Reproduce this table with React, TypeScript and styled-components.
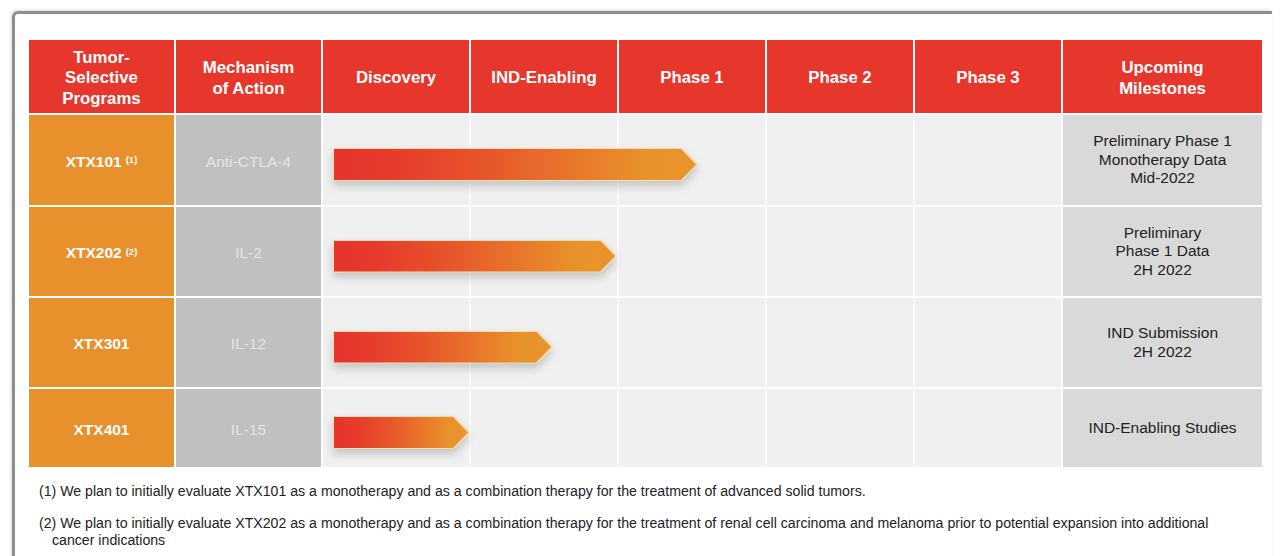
import styled, { createGlobalStyle } from 'styled-components';

const GlobalStyle = createGlobalStyle`
    html, body {
        margin: 0;
        background: #ffffff;
        font-family: "Liberation Sans", Arial, sans-serif;
    }
`;

type Program = {
    name: string;
    note?: string;
    mechanism: string;
    progress: number;
    milestone: string[];
};

const phases = ['Discovery', 'IND-Enabling', 'Phase 1', 'Phase 2', 'Phase 3'];

const programs: Program[] = [
    { name: 'XTX101', note: '(1)', mechanism: 'Anti-CTLA-4', progress: 365, milestone: ['Preliminary Phase 1', 'Monotherapy Data', 'Mid-2022'] },
    { name: 'XTX202', note: '(2)', mechanism: 'IL-2', progress: 284, milestone: ['Preliminary', 'Phase 1 Data', '2H 2022'] },
    { name: 'XTX301', mechanism: 'IL-12', progress: 220, milestone: ['IND Submission', '2H 2022'] },
    { name: 'XTX401', mechanism: 'IL-15', progress: 137, milestone: ['IND-Enabling Studies'] },
];

const App = () => {
    return (
        <>
            <GlobalStyle />
            <Slide>
                <Pipeline>
                    <HeadCell>Tumor-<br />Selective<br />Programs</HeadCell>
                    <HeadCell>Mechanism<br />of Action</HeadCell>
                    {phases.map(p => <HeadCell key={p}>{p}</HeadCell>)}
                    <HeadCell>Upcoming<br />Milestones</HeadCell>

                    {programs.map(row => (
                        <Row key={row.name}>
                            <ProgramCell>
                                {row.name}
                                {row.note && <Note>{row.note}</Note>}
                            </ProgramCell>
                            <MechanismCell>{row.mechanism}</MechanismCell>
                            <Track>
                                <ArrowShadow>
                                    <ArrowEdge style={{ width: row.progress }}>
                                        <ArrowFill />
                                    </ArrowEdge>
                                </ArrowShadow>
                            </Track>
                            <MilestoneCell>
                                {row.milestone.map(line => <span key={line}>{line}</span>)}
                            </MilestoneCell>
                        </Row>
                    ))}
                </Pipeline>

                <Footnotes>
                    <Footnote>(1) We plan to initially evaluate XTX101 as a monotherapy and as a combination therapy for the treatment of advanced solid tumors.</Footnote>
                    <Footnote>(2) We plan to initially evaluate XTX202 as a monotherapy and as a combination therapy for the treatment of renal cell carcinoma and melanoma prior to potential expansion into additional cancer indications</Footnote>
                </Footnotes>
            </Slide>
        </>
    );
};

export default App;

// styled-components

const Slide = styled.div`
    margin: 11px 8px 0 12px;
    height: 560px;
    padding: 26px 0 0 14px;
    border-top: 3px solid #8e8e8e;
    border-left: 3px solid #8e8e8e;
    border-top-left-radius: 6px;
    box-shadow: -1px -1px 3px rgba(0, 0, 0, 0.15);
    box-sizing: border-box;
`;

const Pipeline = styled.div`
    display: grid;
    width: 1233px;
    grid-template-columns: 145px 145px repeat(5, 146px) 199px;
    grid-template-rows: 73px 90px 89px 89px 78px;
    gap: 2px;
`;

const HeadCell = styled.div`
    display: flex;
    align-items: center;
    justify-content: center;
    text-align: center;
    padding-top: 4px;
    background: #e7372c;
    color: #ffffff;
    font-size: 16.8px;
    font-weight: bold;
    line-height: 20.5px;
`;

const Row = styled.div`
    display: contents;
`;

const BodyCell = styled.div`
    display: flex;
    align-items: center;
    justify-content: center;
    text-align: center;
    font-size: 15.5px;
`;

const ProgramCell = styled(BodyCell)`
    background: #e8912c;
    color: #ffffff;
    font-weight: bold;
    padding-top: 3px;
`;

const Note = styled.sup`
    font-size: 9.5px;
    margin-left: 4px;
    position: relative;
    top: -2px;
`;

const MechanismCell = styled(BodyCell)`
    background: #c1c0c0;
    color: #e4e4e4;
    padding-top: 3px;
`;

const Track = styled.div`
    grid-column: span 5;
    display: flex;
    align-items: center;
    padding: 9px 0 0 10px;
    background-color: #f0f0f0;
    background-image: repeating-linear-gradient(
        to right,
        transparent 0 146px,
        #f9f9f9 146px 148px
    );
`;

const ArrowShadow = styled.div`
    filter: drop-shadow(0 5px 4px rgba(0, 0, 0, 0.18));
`;

const ArrowEdge = styled.div`
    height: 33px;
    padding: 1px 2px 1px 1px;
    box-sizing: border-box;
    background: #f6dcb2;
    clip-path: polygon(0 0, calc(100% - 16px) 0, 100% 50%, calc(100% - 16px) 100%, 0 100%);
`;

const ArrowFill = styled.div`
    height: 100%;
    background: linear-gradient(
        to right,
        #e6352c 0%,
        #e7392c 14%,
        #e7562b 42%,
        #e8792a 68%,
        #e8922b 86%,
        #e8942b 100%
    );
    clip-path: polygon(0 0, calc(100% - 15px) 0, 100% 50%, calc(100% - 15px) 100%, 0 100%);
`;

const MilestoneCell = styled(BodyCell)`
    flex-direction: column;
    background: #d9d9d9;
    color: #222222;
    line-height: 18.5px;
`;

const Footnotes = styled.div`
    margin-top: 16px;
    padding-left: 10px;
    width: 1200px;
    color: #222222;
    font-size: 14.15px;
    line-height: 17px;
`;

const Footnote = styled.p`
    margin: 0 0 15px 0;
    padding-left: 13px;
    text-indent: -13px;
`;
